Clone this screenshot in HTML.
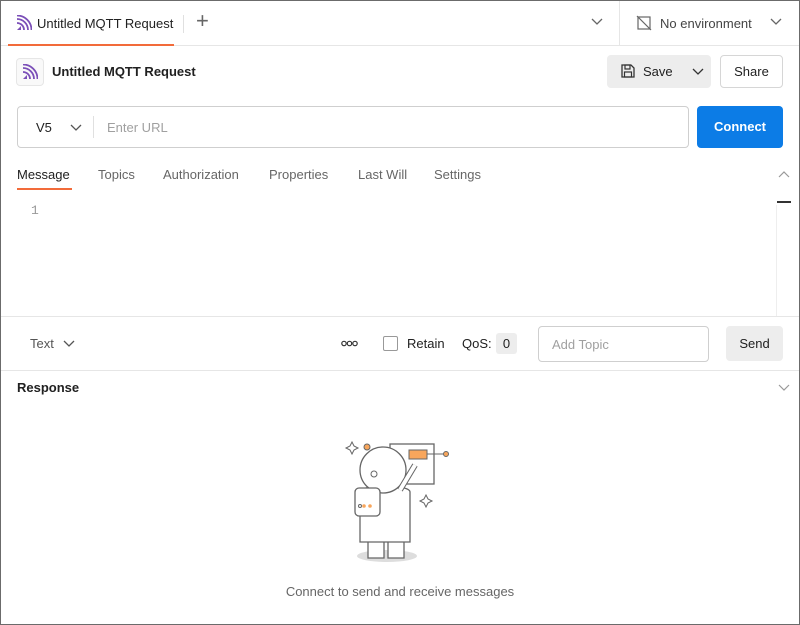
<!DOCTYPE html>
<html><head><meta charset="utf-8"><style>
*{box-sizing:border-box;margin:0;padding:0}
body{width:800px;height:625px;font-family:"Liberation Sans",sans-serif;background:#fff;color:#212121;position:relative;overflow:hidden}
.frame{position:absolute;inset:0;border:1px solid #6b6b6b}
.abs{position:absolute}
.t13{font-size:13px}
</style></head><body>
<div class="frame"></div>
<div class="abs" style="left:1px;right:1px;top:45px;height:1px;background:#e6e6e6"></div>
<div class="abs" style="left:8px;top:44px;width:166px;height:2px;background:#f26b3a"></div>
<svg class="abs" style="left:16px;top:15px" width="16" height="16" viewBox="0 0 16 16"><path d="M1 15h4v-4z" fill="#7b4fb8"/><path d="M1 8a7 7 0 0 1 7 7M1 4a11 11 0 0 1 11 11M1 0.5a14.5 14.5 0 0 1 14.5 14.5" stroke="#7b4fb8" stroke-width="1.8" fill="none"/></svg>
<div class="abs t13" style="left:37px;top:16px;color:#212121">Untitled MQTT Request</div>
<div class="abs" style="left:183px;top:15px;width:1px;height:18px;background:#e0e0e0"></div>
<div class="abs" style="left:196px;top:8px;font-size:22px;color:#666;font-weight:300">+</div>
<svg class="abs" style="left:591px;top:18px" width="12" height="8"><path d="M1 1l5 5 5-5" stroke="#666" fill="none" stroke-width="1.3"/></svg>
<div class="abs" style="left:619px;top:1px;width:1px;height:44px;background:#e6e6e6"></div>
<svg class="abs" style="left:636px;top:15px" width="16" height="16" viewBox="0 0 16 16"><rect x="2" y="2" width="12" height="12" fill="none" stroke="#666" stroke-width="1.2"/><path d="M1 1l14 14" stroke="#666" stroke-width="1.2"/></svg>
<div class="abs t13" style="left:660px;top:16px;color:#444">No environment</div>
<svg class="abs" style="left:770px;top:18px" width="12" height="8"><path d="M1 1l5 5 5-5" stroke="#666" fill="none" stroke-width="1.3"/></svg>
<div class="abs" style="left:16px;top:58px;width:28px;height:28px;border:1px solid #e6e6e6;border-radius:4px;background:#f9f9f9"></div>
<svg class="abs" style="left:22px;top:64px" width="16" height="16" viewBox="0 0 16 16"><path d="M1 15h4v-4z" fill="#7b4fb8"/><path d="M1 8a7 7 0 0 1 7 7M1 4a11 11 0 0 1 11 11M1 0.5a14.5 14.5 0 0 1 14.5 14.5" stroke="#7b4fb8" stroke-width="1.8" fill="none"/></svg>
<div class="abs" style="left:52px;top:64px;font-size:13px;font-weight:bold">Untitled MQTT Request</div>
<div class="abs" style="left:607px;top:55px;width:104px;height:33px;background:#ededed;border-radius:4px"></div>
<svg class="abs" style="left:620px;top:63px" width="16" height="16" viewBox="0 0 16 16"><path d="M2 2h9l3 3v9H2z" fill="none" stroke="#333" stroke-width="1.3"/><rect x="5" y="2" width="5" height="4" fill="none" stroke="#333" stroke-width="1.2"/><rect x="4.5" y="9" width="7" height="5" fill="none" stroke="#333" stroke-width="1.2"/></svg>
<div class="abs t13" style="left:643px;top:64px">Save</div>
<svg class="abs" style="left:692px;top:68px" width="12" height="8"><path d="M1 1l5 5 5-5" stroke="#333" fill="none" stroke-width="1.3"/></svg>
<div class="abs" style="left:720px;top:55px;width:63px;height:33px;border:1px solid #d6d6d6;border-radius:4px;font-size:13px;text-align:center;line-height:31px">Share</div>
<div class="abs" style="left:17px;top:106px;width:672px;height:42px;border:1px solid #cfcfcf;border-radius:4px"></div>
<div class="abs t13" style="left:36px;top:120px">V5</div>
<svg class="abs" style="left:70px;top:124px" width="12" height="8"><path d="M1 1l5 5 5-5" stroke="#555" fill="none" stroke-width="1.3"/></svg>
<div class="abs" style="left:93px;top:116px;width:1px;height:22px;background:#e0e0e0"></div>
<div class="abs t13" style="left:107px;top:120px;color:#a0a0a0">Enter URL</div>
<div class="abs" style="left:697px;top:106px;width:86px;height:42px;background:#0c7ce6;border-radius:4px;color:#fff;font-weight:bold;font-size:13px;text-align:center;line-height:42px">Connect</div>
<div class="abs t13" style="left:17px;top:167px">Message</div>
<div class="abs" style="left:17px;top:188px;width:55px;height:2px;background:#f26b3a"></div>
<div class="abs t13" style="left:98px;top:167px;color:#666">Topics</div>
<div class="abs t13" style="left:163px;top:167px;color:#666">Authorization</div>
<div class="abs t13" style="left:269px;top:167px;color:#666">Properties</div>
<div class="abs t13" style="left:358px;top:167px;color:#666">Last Will</div>
<div class="abs t13" style="left:434px;top:167px;color:#666">Settings</div>
<svg class="abs" style="left:778px;top:170px" width="12" height="8"><path d="M1 7l5-5 5 5" stroke="#999" fill="none" stroke-width="1.2"/></svg>
<div class="abs" style="left:31px;top:203px;font-family:'Liberation Mono',monospace;font-size:13px;color:#999">1</div>
<div class="abs" style="left:777px;top:201px;width:14px;height:2px;background:#333"></div>
<div class="abs" style="left:776px;top:205px;width:1px;height:111px;background:#eee"></div>
<div class="abs" style="left:1px;right:1px;top:316px;height:1px;background:#e6e6e6"></div>
<div class="abs t13" style="left:30px;top:336px;color:#555">Text</div>
<svg class="abs" style="left:63px;top:340px" width="12" height="8"><path d="M1 1l5 5 5-5" stroke="#555" fill="none" stroke-width="1.3"/></svg>
<svg class="abs" style="left:341px;top:340px" width="17" height="7"><circle cx="3" cy="3.5" r="2.2" fill="none" stroke="#333" stroke-width="1.2"/><circle cx="8.5" cy="3.5" r="2.2" fill="none" stroke="#333" stroke-width="1.2"/><circle cx="14" cy="3.5" r="2.2" fill="none" stroke="#333" stroke-width="1.2"/></svg>
<div class="abs" style="left:383px;top:336px;width:15px;height:15px;border:1px solid #999;border-radius:2px"></div>
<div class="abs t13" style="left:407px;top:336px">Retain</div>
<div class="abs t13" style="left:462px;top:336px">QoS:</div>
<div class="abs t13" style="left:496px;top:333px;width:21px;height:21px;background:#ededed;border-radius:3px;text-align:center;line-height:21px">0</div>
<div class="abs" style="left:538px;top:326px;width:171px;height:36px;border:1px solid #cfcfcf;border-radius:4px"></div>
<div class="abs t13" style="left:552px;top:337px;color:#a0a0a0">Add Topic</div>
<div class="abs" style="left:726px;top:326px;width:57px;height:35px;background:#ededed;border-radius:4px;font-size:13px;text-align:center;line-height:35px">Send</div>
<div class="abs" style="left:1px;right:1px;top:370px;height:1px;background:#e6e6e6"></div>
<div class="abs" style="left:17px;top:380px;font-size:13px;font-weight:bold">Response</div>
<svg class="abs" style="left:778px;top:384px" width="12" height="8"><path d="M1 1l5 5 5-5" stroke="#999" fill="none" stroke-width="1.2"/></svg>
<svg class="abs" style="left:330px;top:430px" width="150" height="140" viewBox="0 0 150 140">
<ellipse cx="57" cy="126" rx="30" ry="6" fill="#ddd"/>
<g fill="#fff" stroke="#666" stroke-width="1.3">
<rect x="60" y="14" width="44" height="40"/>
<path d="M38 108l0 20h16l0-20M58 108l0 20h16l0-20"/>
<path d="M30 62c0-8 50-8 50 0v50H30z"/>
<circle cx="53" cy="40" r="23"/>
<path d="M70 60l15-25" stroke-width="6" stroke="#666"/><path d="M70 60l15-25" stroke-width="4" stroke="#fff"/>
<rect x="25" y="58" width="25" height="28" rx="4"/>
</g>
<rect x="79" y="20" width="18" height="9" fill="#f8a65c" stroke="#666"/>
<path d="M97 24h18" stroke="#666"/><circle cx="116" cy="24" r="2.5" fill="#f8a65c" stroke="#666"/>
<circle cx="37" cy="17" r="3" fill="#f8a65c" stroke="#666"/>
<circle cx="44" cy="44" r="3" fill="none" stroke="#666"/>
<circle cx="34" cy="76" r="1.8" fill="#f8a65c"/><circle cx="40" cy="76" r="1.8" fill="#f8a65c"/><circle cx="30" cy="76" r="1.5" fill="none" stroke="#666"/>
<path d="M22 12l2 4 4 2-4 2-2 4-2-4-4-2 4-2z M96 65l2 4 4 2-4 2-2 4-2-4-4-2 4-2z" fill="none" stroke="#666"/>
</svg>
<div class="abs t13" style="left:0;width:800px;top:584px;text-align:center;color:#666">Connect to send and receive messages</div>
</body></html>
